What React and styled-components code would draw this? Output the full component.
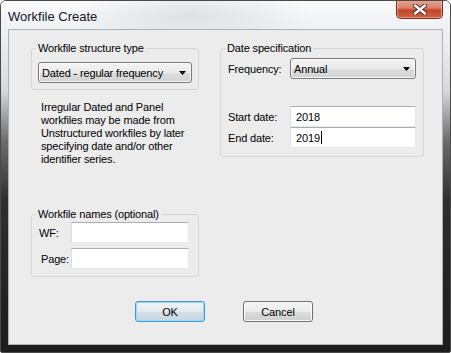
import React from "react";
import styled, { createGlobalStyle } from "styled-components";

const GlobalStyle = createGlobalStyle`
  html, body {
    margin: 0;
    padding: 0;
    background: #ffffff;
  }
  body {
    font-family: "Liberation Sans", Arial, sans-serif;
    letter-spacing: -0.15px;
  }
`;

const App = () => {
  return (
    <>
      <GlobalStyle />
      <Window>
        <TitleBar>
          <Title>Workfile Create</Title>
          <CloseButton aria-label="Close">
            <svg width="14" height="11" viewBox="0 0 14 11">
              <path
                d="M2 1.5 L12 9.5 M12 1.5 L2 9.5"
                stroke="#4a2a24"
                strokeWidth="4.2"
                strokeLinecap="round"
              />
              <path
                d="M2 1.5 L12 9.5 M12 1.5 L2 9.5"
                stroke="#ffffff"
                strokeWidth="2.4"
                strokeLinecap="round"
              />
            </svg>
          </CloseButton>
        </TitleBar>
        <Client>
          <Columns>
            <Column>
              <GroupBox $width={168}>
                <Legend>Workfile structure type</Legend>
                <GroupBody $pad="7px 2px 6px 2px">
                  <Dropdown>
                    <span>Dated - regular frequency</span>
                    <Arrow />
                  </Dropdown>
                </GroupBody>
              </GroupBox>
              <Note>
                Irregular Dated and Panel
                <br />
                workfiles may be made from
                <br />
                Unstructured workfiles by later
                <br />
                specifying date and/or other
                <br />
                identifier series.
              </Note>
              <GroupBox $width={168} $top={42}>
                <Legend>Workfile names (optional)</Legend>
                <GroupBody $pad="1px 5px 7px 3px">
                  <FieldGrid $label={32} $gap={5}>
                    <FieldLabel>WF:</FieldLabel>
                    <TextBox />
                    <FieldLabel $indent={2}>Page:</FieldLabel>
                    <TextBox />
                  </FieldGrid>
                </GroupBody>
              </GroupBox>
            </Column>
            <Column>
              <GroupBox $width={204}>
                <Legend>Date specification</Legend>
                <GroupBody $pad="3px 3px 8px 3px">
                  <FieldGrid $label={62} $gap={0}>
                    <FieldLabel>Frequency:</FieldLabel>
                    <Dropdown>
                      <span>Annual</span>
                      <Arrow />
                    </Dropdown>
                    <Spacer />
                    <FieldLabel>Start date:</FieldLabel>
                    <TextBox>2018</TextBox>
                    <FieldLabel>End date:</FieldLabel>
                    <TextBox>
                      2019
                      <Caret />
                    </TextBox>
                  </FieldGrid>
                </GroupBody>
              </GroupBox>
            </Column>
          </Columns>
          <ButtonRow>
            <Button $default>OK</Button>
            <Button>Cancel</Button>
          </ButtonRow>
        </Client>
      </Window>
    </>
  );
};

const Arrow = () => (
  <svg width="7" height="4" viewBox="0 0 7 4">
    <polygon points="0,0 7,0 3.5,4" fill="#000" />
  </svg>
);

// Styled Components
const Window = styled.div`
  width: 451px;
  height: 353px;
  box-sizing: border-box;
  display: flex;
  flex-direction: column;
  border: 1px solid #4a4a4a;
  border-radius: 6px 6px 2px 2px;
  background: linear-gradient(
    to bottom,
    #f6f7f9 0px,
    #eceef1 40px,
    #d6d8db 90px,
    #6c6c6c 140px,
    #2e2e2e 200px,
    #1c1c1c 100%
  );
  overflow: hidden;
`;

const TitleBar = styled.div`
  height: 28px;
  display: flex;
  align-items: flex-start;
  justify-content: space-between;
  padding-left: 7px;
  padding-right: 7px;
  background: radial-gradient(
      ellipse 120px 30px at 190px 14px,
      rgba(205, 208, 212, 0.55),
      rgba(255, 255, 255, 0)
    ),
    linear-gradient(#fbfbfc, #eef0f2);
`;

const Title = styled.div`
  font-size: 13px;
  line-height: 15px;
  padding-top: 8px;
  letter-spacing: 0;
  color: #14142c;
`;

const CloseButton = styled.div`
  width: 45px;
  height: 18px;
  margin-top: -1px;
  display: flex;
  align-items: center;
  justify-content: center;
  border: 1px solid #7a2a1c;
  border-top: none;
  border-radius: 0 0 5px 5px;
  background: linear-gradient(#e8a592 0%, #d8826c 45%, #c4452c 55%, #d0603e 100%);
  box-shadow: inset 0 0 0 1px rgba(255, 210, 200, 0.5);
`;

const Client = styled.div`
  flex: 1;
  margin: 0 7px 7px 7px;
  border: 1px solid #a9b2bb;
  background: #ececec;
  padding: 12px 0 0 22px;
  display: flex;
  flex-direction: column;
`;

const Columns = styled.div`
  display: flex;
  gap: 21px;
`;

const Column = styled.div`
  display: flex;
  flex-direction: column;
`;

const GroupBox = styled.fieldset`
  width: ${(p) => p.$width}px;
  box-sizing: border-box;
  margin: ${(p) => p.$top || 0}px 0 0 0;
  padding: 0 4px;
  min-width: 0;
  border: 1px solid #d2d6d9;
  border-radius: 3px;
`;

const Legend = styled.legend`
  padding: 0 2px;
  font-size: 11px;
  line-height: 13px;
  color: #000;
`;

const GroupBody = styled.div`
  padding: ${(p) => p.$pad};
`;

const Dropdown = styled.div`
  height: 21px;
  box-sizing: border-box;
  display: flex;
  align-items: center;
  justify-content: space-between;
  padding: 0 5px 0 3px;
  border: 1px solid #7a7a7a;
  border-radius: 3px;
  background: linear-gradient(#f4f4f4 0%, #ebebeb 50%, #dedede 51%, #d2d2d2 100%);
  box-shadow: inset 0 0 0 1px #f9f9f9;
  font-size: 11px;
  color: #000;
`;

const Note = styled.p`
  margin: 11px 0 0 10px;
  font-size: 11px;
  line-height: 13px;
  color: #000;
`;

const FieldGrid = styled.div`
  display: grid;
  grid-template-columns: ${(p) => p.$label}px 1fr;
  row-gap: ${(p) => p.$gap}px;
  align-items: center;
`;

const FieldLabel = styled.span`
  font-size: 11px;
  color: #000;
  padding-left: ${(p) => p.$indent || 0}px;
`;

const Spacer = styled.div`
  grid-column: 1 / -1;
  height: 27px;
`;

const TextBox = styled.div`
  height: 21px;
  box-sizing: border-box;
  display: flex;
  align-items: center;
  padding-left: 5px;
  background: #fff;
  border: 1px solid #e3e9ef;
  border-top-color: #abadb3;
  border-left-color: #dbdfe6;
  font-size: 11px;
  color: #000;
`;

const Caret = styled.span`
  display: inline-block;
  width: 1px;
  height: 13px;
  margin-left: 1px;
  background: #000;
`;

const ButtonRow = styled.div`
  display: flex;
  justify-content: center;
  gap: 38px;
  margin-top: 24px;
  padding-right: 25px;
`;

const Button = styled.div`
  width: 70px;
  height: 21px;
  box-sizing: border-box;
  display: flex;
  align-items: center;
  justify-content: center;
  border-radius: 3px;
  font-size: 11px;
  color: #000;
  border: 1px solid ${(p) => (p.$default ? "#3a9ad9" : "#707070")};
  background: ${(p) =>
    p.$default
      ? "linear-gradient(#eef3f7 0%, #e4ebf0 50%, #d3dfe7 51%, #c8d7e2 100%)"
      : "linear-gradient(#f4f4f4 0%, #ebebeb 50%, #dddddd 51%, #cfcfcf 100%)"};
  box-shadow: inset 0 0 0 1px
    ${(p) => (p.$default ? "#9fd6f4" : "#fbfbfb")};
`;

export default App;
